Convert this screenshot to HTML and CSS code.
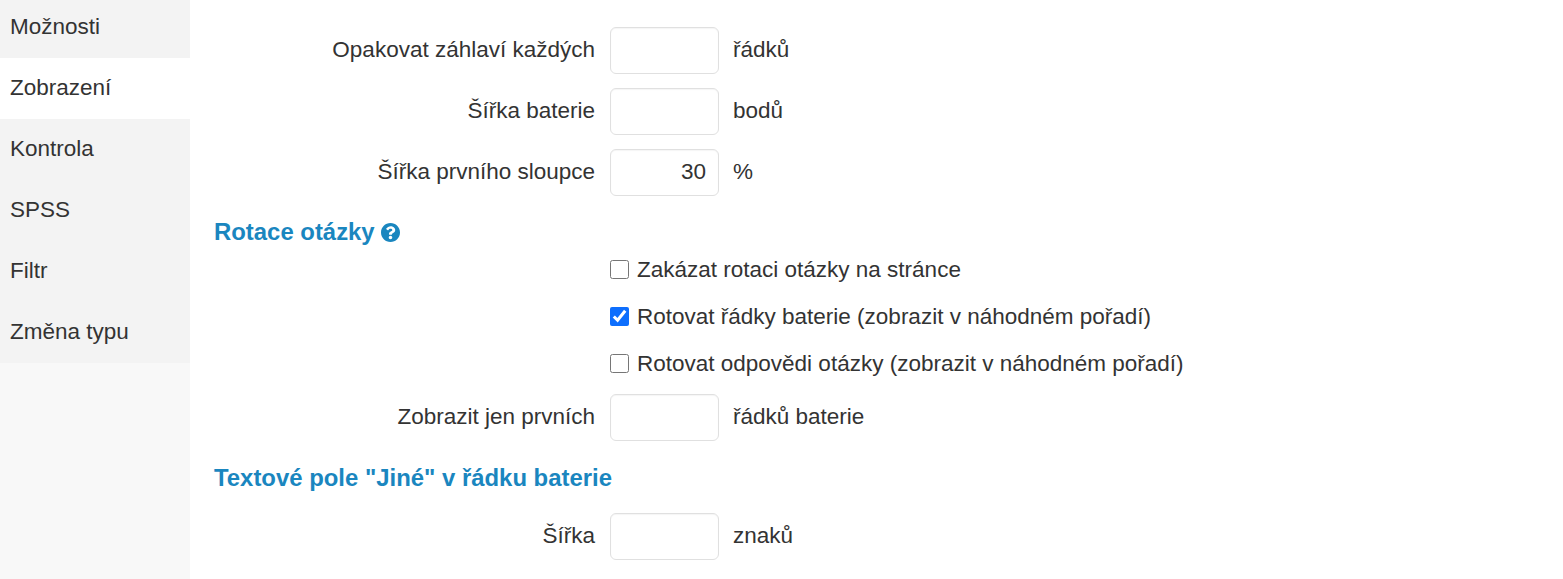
FILE: index.html
```html
<!DOCTYPE html>
<html lang="cs">
<head>
<meta charset="utf-8">
<title>Zobrazení</title>
<link rel="stylesheet" href="styles.css">
</head>
<body>
<div class="page">
  <nav class="sidebar">
    <a class="tab tab-first">Možnosti</a>
    <a class="tab tab-active">Zobrazení</a>
    <a class="tab">Kontrola</a>
    <a class="tab">SPSS</a>
    <a class="tab">Filtr</a>
    <a class="tab">Změna typu</a>
  </nav>
  <main class="content">
    <div class="row row-first">
      <label class="label">Opakovat záhlaví každých</label>
      <input class="field" type="text">
      <span class="unit">řádků</span>
    </div>
    <div class="row">
      <label class="label">Šířka baterie</label>
      <input class="field" type="text">
      <span class="unit">bodů</span>
    </div>
    <div class="row">
      <label class="label">Šířka prvního sloupce</label>
      <input class="field" type="text" value="30">
      <span class="unit">%</span>
    </div>
    <h3 class="heading heading-rotation">Rotace otázky
      <svg class="help" viewBox="8 8 496 496" aria-hidden="true"><path fill="#1a86bf" d="M504 256c0 136.997-111.043 248-248 248S8 392.997 8 256C8 119.083 119.043 8 256 8s248 111.083 248 248zM262.655 90c-54.497 0-89.255 22.957-116.549 63.758-3.536 5.286-2.353 12.415 2.715 16.258l34.699 26.31c5.205 3.947 12.621 3.008 16.665-2.122 17.864-22.658 30.113-35.797 57.303-35.797 20.429 0 45.698 13.148 45.698 32.958 0 14.976-12.363 22.667-32.534 33.976C247.128 238.528 216 254.941 216 296v4c0 6.627 5.373 12 12 12h56c6.627 0 12-5.373 12-12v-1.333c0-28.462 83.186-29.647 83.186-106.667 0-58.002-60.165-102-116.531-102zM256 338c-25.365 0-46 20.635-46 46 0 25.364 20.635 46 46 46s46-20.636 46-46c0-25.365-20.635-46-46-46z"/></svg>
    </h3>
    <div class="checks">
      <label class="check"><input type="checkbox">Zakázat rotaci otázky na stránce</label>
      <label class="check"><input type="checkbox" checked>Rotovat řádky baterie (zobrazit v náhodném pořadí)</label>
      <label class="check"><input type="checkbox">Rotovat odpovědi otázky (zobrazit v náhodném pořadí)</label>
    </div>
    <div class="row row-after-checks">
      <label class="label">Zobrazit jen prvních</label>
      <input class="field" type="text">
      <span class="unit">řádků baterie</span>
    </div>
    <h3 class="heading heading-other">Textové pole "Jiné" v řádku baterie</h3>
    <div class="row row-last">
      <label class="label">Šířka</label>
      <input class="field" type="text">
      <span class="unit">znaků</span>
    </div>
  </main>
</div>
</body>
</html>
```
FILE: styles.css
```css
* { box-sizing: border-box; }
html, body { margin: 0; height: 100%; overflow: hidden; background: #fff; }
body { font-family: "Liberation Sans", Arial, sans-serif; font-size: 22.5px; color: #333; }
.page { display: flex; height: 579px; }
.sidebar { width: 190px; flex: none; background: #f8f8f8; display: flex; flex-direction: column; }
.tab { height: 61px; background: #f3f3f3; padding: 0 0 2px 10px; display: flex; align-items: center; }
.tab-first { height: 58px; padding-bottom: 4px; }
.tab-active { background: #fff; }
.content { flex: 1; padding-left: 24px; min-width: 0; }
.row { display: grid; grid-template-columns: 396px 109px auto; align-items: center; height: 47px; margin-bottom: 14px; }
.row-first { margin-top: 27px; }
.label { text-align: right; padding: 0 15px 2px 0; }
.field { width: 109px; height: 47px; border: 1px solid #e0e0e0; border-radius: 6px; font: inherit; color: #333; text-align: right; padding: 0 12px 2px; background: #fff; box-shadow: inset 0 1px 1px rgba(0,0,0,.04); outline: none; }
.unit { padding: 0 0 2px 14px; }
.heading { margin: 0; font-size: 23.9px; font-weight: 700; color: #1a86bf; line-height: 26px; }
.heading-rotation { display: flex; align-items: center; gap: 6px; margin-top: 23px; height: 26px; }
.help { width: 19px; height: 19px; }
.checks { padding: 1px 0 0 396px; }
.check { display: flex; align-items: center; height: 47px; }
.check input { width: 19px; height: 19px; margin: 0 8px 0 0; accent-color: #0d6efd; }
.row-after-checks { margin: 7px 0 0; }
.heading-other { margin-top: 24px; }
.row-last { margin: 22px 0 0; }
```
